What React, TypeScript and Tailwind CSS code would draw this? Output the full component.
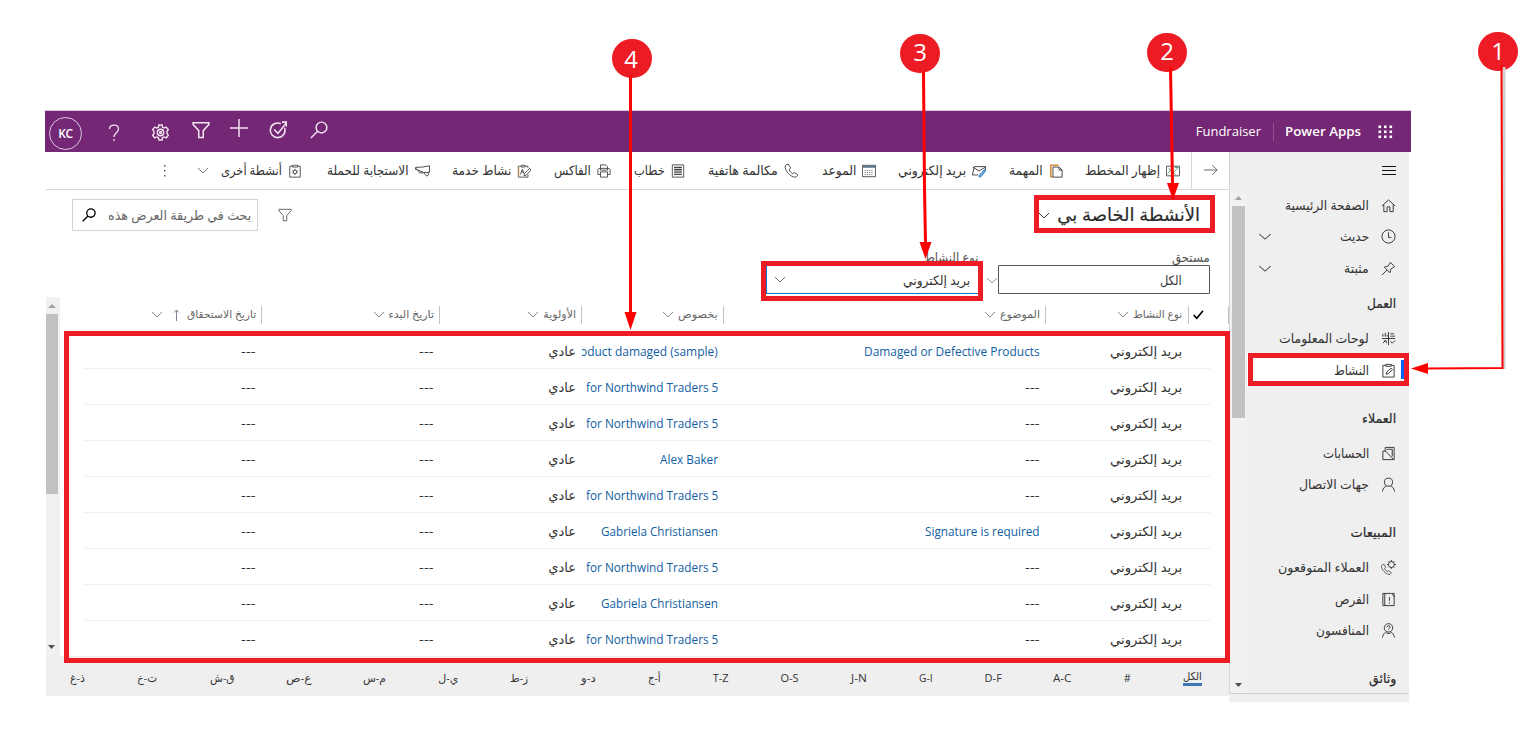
import React, { useLayoutEffect, useRef, useState } from "react";

function Fit({ w, children, className = "" }: { w: number; children: React.ReactNode; className?: string }) {
  const ref = useRef<HTMLSpanElement>(null);
  const [scale, setScale] = useState(1);
  useLayoutEffect(() => {
    if (ref.current && ref.current.offsetWidth > 0) setScale(w / ref.current.offsetWidth);
  }, [w]);
  return (
    <span className={"inline-flex shrink-0 justify-start " + className} style={{ width: w }}>
      <span ref={ref} className="inline-block shrink-0 origin-right whitespace-nowrap" style={{ transform: `scaleX(${scale})` }}>
        {children}
      </span>
    </span>
  );
}

function Icon({ children, size = 14, className = "", stroke = 1 }: { children: React.ReactNode; size?: number; className?: string; stroke?: number }) {
  return (
    <svg width={size} height={size} viewBox="0 0 16 16" fill="none" stroke="currentColor" strokeWidth={stroke} className={"shrink-0 " + className}>
      {children}
    </svg>
  );
}

function Chevron({ className = "" }: { className?: string }) {
  return (
    <svg width="12" height="7" viewBox="0 0 12 7" fill="none" stroke="currentColor" className={"shrink-0 " + className}>
      <path d="M1 1l5 5 5-5" />
    </svg>
  );
}

const searchPath = <path d="M6.6 9.4L.8 15.2M15 5.8a4.8 4.8 0 1 1-9.6 0a4.8 4.8 0 0 1 9.6 0z" />;
const filterPath = <path d="M1 1.5h14v1.6L10 8.6v6H6v-6L1 3.100z" />;
const phonePath = (
  <path d="M4.600 1.200L2.300 2C.6 3 1 5.800 2.800 8.800c2.300 3.700 6 6.200 8.800 6.300 1.600 0 2.600-.9 3.100-2.400l-3.600-2.600-2.100 1.300C7.400 10.400 6.100 8.900 5.400 7.200l1.700-1.900z" />
);

const commands: { label: string; w: number; icon: React.ReactNode }[] = [
  {
    label: "إظهار المخطط", w: 75,
    icon: <Icon><path d="M.5 2.500h15v11H.5z" stroke="#444" /><path d="M2 11l4-5 3 3 5-5M10 4h4M3 5l8 7" stroke="#3a9a62" /></Icon>,
  },
  {
    label: "المهمة", w: 34,
    icon: <Icon><path d="M11 1.500H2v13h2" stroke="#d48b3c" strokeWidth="1.800" /><path d="M4.500 3.500h7l3.500 3.500v8H4.500zM11.500 3.500V7H15" stroke="#333" /></Icon>,
  },
  {
    label: "بريد إلكتروني", w: 68,
    icon: <Icon><path d="M7 12.500H.5l2-9.500h13v4M1 3.500l7 4.500 7.500-4.500" stroke="#333" /><path d="M14.500 6l-6 6.500-.5 2.500 2.500-.7 5-6.300z" fill="#76b1e4" stroke="#2b79b9" /></Icon>,
  },
  {
    label: "الموعد", w: 34,
    icon: <Icon><path d="M.5 1.500h15v13H.5z" /><path d="M1 3.200h14" stroke="#5b7890" strokeWidth="2.200" /><path d="M3 7.500h10M3 9.800h10M3 12.100h10" strokeDasharray="1.500 1" stroke="#777" /></Icon>,
  },
  { label: "مكالمة هاتفية", w: 70, icon: <Icon size={15}>{phonePath}</Icon> },
  {
    label: "خطاب", w: 31,
    icon: <Icon><path d="M1.500 1h13v14h-13z" /><path d="M3.500 4h9M3.500 6.600h9M3.500 9.200h9M3.500 11.800h9" strokeWidth="1.500" /></Icon>,
  },
  {
    label: "الفاكس", w: 37,
    icon: <Icon><path d="M4 5V1h6l2 2v2M4 12H1V6l1-1h12l1 1v6h-3M4 9h8v6H4zM4 5v2h8V5" /></Icon>,
  },
  {
    label: "نشاط خدمة", w: 59,
    icon: <Icon><path d="M5 2.500H1.500v12.500h11v-3M9 2.500h3.500v2M5 1.500h4v2H5z" /><path d="M4 12l2-6 2 5M5 9h3M14.500 5l-6 6-.5 2.500 2.500-.7L16 7z" /><path d="M2 14V3" stroke="#ce8943" /></Icon>,
  },
  {
    label: "الاستجابة للحملة", w: 82,
    icon: <Icon size={15}><path d="M15.500 3v7L9 10 1 6.500v-2h6L15.500 3zM1 4.500l-.5 1 .5 2M9 10l3.500 4 2-1.500-.5-2.500M3 7.500l2 3 4 0" /></Icon>,
  },
  {
    label: "أنشطة أخرى", w: 61,
    icon: <Icon><path d="M5 2.500H2V15h12V2.500h-3M5 1.500h6v2H5z" /><circle cx="8" cy="9" r="2" /><path d="M8 5.500V7M8 11v1.800M4.800 7.500l1.500.7M9.700 9.800l1.500.8M11.200 7.500l-1.500.7M6.300 9.800l-1.500.8" /></Icon>,
  },
];

const columns = [
  { label: "نوع النشاط", w: 49 },
  { label: "الموضوع", w: 40 },
  { label: "بخصوص", w: 40 },
  { label: "الأولوية", w: 33 },
  { label: "تاريخ البدء", w: 45 },
  { label: "تاريخ الاستحقاق", w: 69, sorted: true },
];

const northwind = { text: "for Northwind Traders 5", w: 132 };
const gabriela = { text: "Gabriela Christiansen", w: 117 };
const rows: { subject?: { text: string; w: number }; regarding: { text: string; w: number } }[] = [
  { subject: { text: "Damaged or Defective Products", w: 176 }, regarding: { text: "oduct damaged (sample)", w: 138 } },
  { regarding: northwind },
  { regarding: northwind },
  { regarding: { text: "Alex Baker", w: 58 } },
  { regarding: northwind },
  { subject: { text: "Signature is required", w: 115 }, regarding: gabriela },
  { regarding: northwind },
  { regarding: gabriela },
  { regarding: northwind },
];

const letters: [string, number][] = [
  ["الكل", 19], ["#", 7], ["A-C", 18], ["D-F", 17], ["G-I", 14], ["J-N", 16], ["O-S", 18], ["T-Z", 16], ["أ-ج", 13],
  ["د-و", 15], ["ز-ط", 18], ["ي-ل", 20], ["م-س", 23], ["ع-ص", 25], ["ق-ش", 25], ["ت-خ", 20], ["ذ-غ", 15],
];

function NavItem({ label, w, icon, h, expand, selected }: { label: string; w: number; icon: React.ReactNode; h: string; expand?: boolean; selected?: boolean }) {
  return (
    <div className={"flex shrink-0 items-center pr-[13px] text-[13px] text-[#333] " + h + (selected ? " relative bg-white" : "")}>
      {selected && <span className="absolute right-[4px] top-[6px] h-[19px] w-[4px] bg-[#0a62f5]" />}
      <Icon size={15}>{icon}</Icon>
      <Fit w={w} className="mr-[12px] pt-px">{label}</Fit>
      {expand && <Chevron className="mr-auto ml-[12px] scale-x-[1.15] text-[#555]" />}
    </div>
  );
}

function NavHeading({ label, w, first }: { label: string; w: number; first?: boolean }) {
  return (
    <div className={"flex shrink-0 items-center pr-[13px] text-[13px] text-[#2b2b2b] [-webkit-text-stroke:0.2px_#2b2b2b] " + (first ? "h-[38px] pt-[2px]" : "h-[51px] pt-[14px]")}>
      <Fit w={w}>{label}</Fit>
    </div>
  );
}

function Header() {
  return (
    <header className="flex h-[42px] items-center border-t border-[#d9c3dc] bg-[#742774] pr-[17px] text-[13px] text-white">
      <svg width="15" height="14" viewBox="0 0 15 14" fill="#fff" className="mr-[1px]">
        {[0, 5.500, 11].map((x) => [0, 5, 10].map((y) => <rect key={x + "-" + y} x={x + 0.5} y={y + 0.5} width="2.600" height="2.600" />))}
      </svg>
      <Fit w={76} className="mr-[17px] font-semibold">Power Apps</Fit>
      <span className="mr-[11px] h-[18px] w-px bg-[#8f5490]" />
      <Fit w={65} className="mr-[12px]">Fundraiser</Fit>
      <div className="mr-auto flex h-full items-center text-[#f0e4f0]" dir="ltr">
        <span className="ml-[4px] mt-[4px] flex size-[33px] items-center justify-center rounded-full border border-[#dcc8dc] text-[12px] font-semibold tracking-tight text-white">KC</span>
        <span className="ml-[24px] flex w-[15px] justify-center">
          <svg width="12" height="18" viewBox="0 0 12 18" fill="none" stroke="currentColor" strokeWidth="1.300" className="mt-[2px]">
            <path d="M1.500 5C1.500-.2 10.500-.2 10.500 5c0 3.500-4.500 4-4.500 8M6 15v2" />
          </svg>
        </span>
        <Icon size={17} stroke={1.3} className="ml-[31px] mt-[2px]">
          <path d="M6.500 1h3l.4 2 1.500.8 1.900-.9 2 2.300-1.200 1.700v1.900l1.300 1.800-2 2.400-2-.8-1.500.8-.4 2h-3l-.5-2-1.500-.8-2 .8-1.900-2.400 1.300-1.700V7.100L.6 5.200l2-2.300 1.900.9L6 3z" />
          <circle cx="8" cy="8" r="3" /><circle cx="8" cy="8" r=".9" />
        </Icon>
        <Icon size={18} stroke={1.4} className="ml-[23px] -mt-[3px]">{filterPath}</Icon>
        <Icon size={18} stroke={1.3} className="ml-[20px] -mt-[7px]"><path d="M8 0v16M0 8h16" /></Icon>
        <Icon size={18} stroke={1.4} className="ml-[21px] -mt-[3px]"><path d="M10.500 2.400A6.500 6.500 0 1 0 13.800 6M4.500 7.500L8 11l7.500-9.500M11.500 1h4v4" /></Icon>
        <Icon size={18} stroke={1.3} className="ml-[23px] -mt-[4px]">{searchPath}</Icon>
      </div>
    </header>
  );
}

function CommandBar() {
  return (
    <div className="grid h-[38px] grid-cols-[38px_128px_77px_110px_77px_114px_74px_80px_101px_128px_94px_1fr] items-center border-b border-[#d8d8d8] pb-px text-[13px] text-[#333]">
      <div className="flex h-[37px] items-center border-l border-[#d8d8d8] pr-[11px]">
        <Icon size={14} className="-mt-[2px] text-[#555]"><path d="M0 8h15M9.500 2.500L15 8l-5.500 5.500" /></Icon>
      </div>
      {commands.map((c, i) => (
        <div key={c.label} className={"flex items-center gap-[6px] text-[#444] " + (i === 0 ? "pr-[11px]" : "")}>
          {c.icon}
          <Fit w={c.w} className="text-[#333]">{c.label}</Fit>
        </div>
      ))}
      <div className="flex items-center text-[#777]">
        <Chevron className="-mr-[1px]" />
        <svg width="3" height="14" viewBox="0 0 3 14" fill="#555" className="mr-[31px]">
          <rect x="1" y="1" width="1.500" height="1.500" /><rect x="1" y="6" width="1.500" height="1.500" /><rect x="1" y="11" width="1.500" height="1.500" />
        </svg>
      </div>
    </div>
  );
}

function Grid() {
  return (
    <div className="flex h-[359px]">
      <div className="flex min-w-0 flex-1 flex-col">
        <div className="grid h-[34px] grid-cols-[40px_143px_322px_142px_142px_178px_1fr] items-center pt-[2px] text-[11px] text-[#666]">
          <div className="flex h-[18px] items-center border-r border-[#c4c4c4] pr-[24px] text-black">
            <Icon size={11} stroke={2.4}><path d="M1 9l4.500 4.500L14.500 2.500" /></Icon>
          </div>
          {columns.map((c, i) => (
            <div key={c.label} className={"flex h-[18px] items-center border-r border-[#c4c4c4] " + (i === 0 ? "pr-[6px]" : "pr-[5px]")}>
              <Fit w={c.w}>{c.label}</Fit>
              {c.sorted && (
                <svg width="7" height="12" viewBox="0 0 7 12" fill="none" stroke="#8a7a94" className="mr-[7px]"><path d="M3.500 12V1M1 3.500L3.500 1 6 3.500" /></svg>
              )}
              <Chevron className={(c.sorted ? "mr-[10px]" : "mr-[4px]") + " text-[#888]"} />
            </div>
          ))}
        </div>
        <div className="mr-[18px] ml-[23px] flex flex-col pt-[3px]">
          {rows.map((r, i) => (
            <div key={i} className={"grid grid-cols-[142px_322px_142px_142px_178px_1fr] items-center pt-[2px] pr-[29px] text-[13px] text-[#333] " + (i < rows.length - 1 ? "h-[36px] border-b border-[#f1f1f1]" : "h-[35px]")}>
              <Fit w={72}>بريد إلكتروني</Fit>
              {r.subject ? <Fit w={r.subject.w} className="text-[#115ea3]">{r.subject.text}</Fit> : <Fit w={15}>---</Fit>}
              <div className="w-[136px] overflow-hidden text-[#115ea3]">
                <Fit w={r.regarding.w}><bdi>{r.regarding.text}</bdi></Fit>
              </div>
              <Fit w={28}>عادي</Fit>
              <Fit w={15}>---</Fit>
              <Fit w={15}>---</Fit>
            </div>
          ))}
        </div>
      </div>
      <div className="flex w-[14px] flex-col items-start bg-[#f1f1f1]" dir="ltr">
        <svg width="12" height="17" viewBox="0 0 12 17" fill="#a3a3a3"><path d="M2 11h8L6 7z" /></svg>
        <div className="h-[180px] w-[12px] bg-[#c1c1c1]" />
        <svg width="12" height="17" viewBox="0 0 12 17" fill="#505050" className="mt-auto"><path d="M2 6h7L5.500 10z" /></svg>
      </div>
    </div>
  );
}

function Sidebar() {
  return (
    <aside className="flex h-[550px] w-[180px] flex-col bg-[#efefef]">
      <div className="flex h-[542px] flex-col overflow-hidden border-b border-[#d0d0d0]">
        <div className="flex h-[38px] shrink-0 items-center border-l border-[#d6d6d6] pr-[13px] pb-px">
          <svg width="14" height="11" viewBox="0 0 14 11" stroke="#111"><path d="M0 1.500h14M0 5.500h14M0 9.500h14" /></svg>
        </div>
        <div className="flex flex-1">
          <nav className="flex h-[504px] w-[162px] flex-col overflow-hidden text-[#333]">
            <NavItem h="h-[31px]" label="الصفحة الرئيسية" w={84} icon={<path d="M1 8.500L8 2l7 6.500M3 7v7.500h3.500v-5h3v5H13V7" />} />
            <NavItem h="h-[31px]" expand label="حديث" w={29} icon={<><circle cx="8" cy="8" r="7" /><path d="M8 3.500V9h3" /></>} />
            <NavItem h="h-[32px]" expand label="مثبتة" w={25} icon={<path d="M10 1.500L14.500 6 10.500 8.500 9.500 12.500 3.500 6.500 7.500 5.500zM6.500 9.500L1 15" />} />
            <NavHeading first label="العمل" w={29} />
            <NavItem h="h-[32px]" label="لوحات المعلومات" w={90} icon={<path d="M8 1v14M1 8h14M2 6V3M4.500 6V2M6.500 6V4M10 3h4M10 5.500h5M2 13l3-3 1 3M10 11l2 2 3-3M3 10.500h2" />} />
            <NavItem h="h-[32px]" selected label="النشاط" w={35} icon={<path d="M5 2.500H2V15h12V2.500h-3M5 1.500h6v2H5zM5.500 12l.7-2.500 4.500-4 1.600 1.500-4.500 4.300z" />} />
            <NavHeading label="العملاء" w={34} />
            <NavItem h="h-[32px]" label="الحسابات" w={46} icon={<path d="M2 5.500h3l8 8.500M2 5.500v9h12v-13H4.500v4M6 3.500h6V11" />} />
            <NavItem h="h-[31px]" label="جهات الاتصال" w={70} icon={<><circle cx="8" cy="5.500" r="4.300" /><path d="M1.500 15.500c.5-4 3-5.500 4.500-6M14.500 15.500c-.5-4-3-5.500-4.500-6" /></>} />
            <NavHeading label="المبيعات" w={45} />
            <NavItem h="h-[32px]" label="العملاء المتوقعون" w={91} icon={<><g transform="translate(-.5 3.500) scale(.78)">{phonePath}</g><circle cx="11" cy="4.800" r="3.200" /><path d="M11 0v2M11 7.500v2M6.500 4.800H8M14 4.800h2M8 1.500l1 1M14 1.500l-1 1M13 7l1 1" /></>} />
            <NavItem h="h-[32px]" label="الفرص" w={34} icon={<path d="M2 1.500h9l3 3v10H2zM4 1.500v13M9 5.500v4M9 11v1.300M11.500 1.500h2.500v4" />} />
            <NavItem h="h-[31px]" label="المنافسون" w={53} icon={<><circle cx="8" cy="5.200" r="4.500" /><path d="M6.300 4.500c0-2 3.400-2 3.400 0C9.700 5.800 8 5.500 8 7M1.500 15.500c.5-3 2.500-5.500 4.500-6M14.500 15.500c-.5-3-2.500-5.500-4.500-6M6 11l4 0" /></>} />
            <NavHeading label="وثائق" w={27} />
          </nav>
          <div className="flex h-[504px] w-[18px] flex-col items-center border-l border-[#d6d6d6] bg-[#f1f1f1]">
            <svg width="13" height="16" viewBox="0 0 13 16" fill="#a3a3a3"><path d="M3 10h7L6.500 6z" /></svg>
            <div className="h-[212px] w-[13px] bg-[#c1c1c1]" />
            <svg width="13" height="17" viewBox="0 0 13 17" fill="#505050" className="mt-auto"><path d="M3 6h7L6.500 10z" /></svg>
          </div>
        </div>
      </div>
    </aside>
  );
}

function Callout({ n, pos }: { n: number; pos: string }) {
  return (
    <div dir="ltr" className={"absolute flex h-[39px] w-[40px] items-center justify-center rounded-full bg-[#ed1c24] text-[24px] leading-none text-white " + pos}>{n}</div>
  );
}

export default function App() {
  return (
    <div dir="rtl" className="relative h-[737px] w-[1534px] overflow-hidden bg-white pt-[110px] pr-[123px] font-['Open_Sans','Noto_Sans','DejaVu_Sans',sans-serif]">
      <div className="w-[1366px]">
        <Header />
        <div className="flex items-start pr-[2px]">
          <Sidebar />
          <main className="flex h-[544px] w-[1183px] flex-col bg-white">
            <CommandBar />
            <div className="flex h-[55px] items-center pr-[29px] pb-[5px]">
              <Fit w={143} className="-mt-[2px] text-[18px] text-[#2b2b2b] [-webkit-text-stroke:0.2px_#2b2b2b]">الأنشطة الخاصة بي</Fit>
              <Chevron className="mr-[7px] text-[#333]" />
              <Icon size={14} className="mr-auto ml-[20px] text-[#555]">{filterPath}</Icon>
              <div className="mr-0 ml-[26px] flex h-[32px] w-[186px] shrink-0 items-center border border-[#d2d2d2] pr-[6px] text-[13px] text-[#666]">
                <Fit w={143} className="pt-[2px]">بحث في طريقة العرض هذه</Fit>
                <Icon size={14} stroke={1.5} className="mr-[12px] text-black">{searchPath}</Icon>
              </div>
            </div>
            <div className="flex h-[52px] items-start pr-[19px] pt-[4px] text-[13px] text-[#555]">
              <div className="flex w-[212px] flex-col">
                <div className="flex h-[16px] items-center pt-[2px]"><Fit w={38}>مستحق</Fit></div>
                <div className="flex h-[29px] items-center rounded-[1px] border border-[#555] pt-[2px] pr-[27px] text-[#333]"><Fit w={22}>الكل</Fit></div>
              </div>
              <Chevron className="mt-[28px] text-[#999]" />
              <div className="mr-[7px] flex w-[213px] flex-col">
                <div className="flex h-[16px] items-center pt-[2px]"><Fit w={55}>نوع النشاط</Fit></div>
                <div className="flex h-[29px] items-center border border-[#0f78c8] pr-[8px] text-[#333]">
                  <Fit w={67} className="pt-[2px]">بريد إلكتروني</Fit>
                  <Chevron className="mr-auto ml-[7px] text-[#777]" />
                </div>
              </div>
            </div>
            <Grid />
            <footer className="flex h-[40px] items-center justify-between bg-[#efefef] pr-[27px] pl-[24px] pt-[4px] text-[11px] text-[#333]">
              {letters.map(([l, w], i) => (
                <Fit key={l} w={w} className={i === 0 ? "h-[16px] items-end border-b-[3px] border-[#3b78b5] leading-[14px]" : ""}><bdi>{l}</bdi></Fit>
              ))}
            </footer>
          </main>
        </div>
      </div>

      <div className="absolute top-[353px] left-[1248px] h-[33px] w-[161px] border-[5px] border-[#ed1c24]" />
      <div className="absolute top-[195px] left-[1034px] h-[38px] w-[181px] border-[5px] border-[#ed1c24]" />
      <div className="absolute top-[261px] left-[761px] h-[40px] w-[222px] border-[5px] border-[#ed1c24]" />
      <div className="absolute top-[331px] left-[64px] h-[332px] w-[1166px] border-[5px] border-[#ed1c24]" />

      <Callout n={1} pos="left-[1478px] top-[32px] pb-[2px]" />
      <Callout n={2} pos="left-[1147px] top-[33px] pb-[4px]" />
      <Callout n={3} pos="left-[900px] top-[34px] pb-[4px]" />
      <Callout n={4} pos="left-[612px] top-[39px] pr-[2px]" />
      <svg width="1534" height="737" viewBox="0 0 1534 737" className="pointer-events-none absolute top-0 left-0" fill="none" stroke="#fe0000" strokeWidth="3">
        <path d="M1504 67v302" stroke="#cfcfcf" />
        <path d="M1501.500 65L1502.500 368L1426 368.500" strokeWidth="2" />
        <path d="M1170.500 67L1172.500 184" />
        <path d="M923.500 72L924.500 188L925.500 243" />
        <path d="M630.500 75V314" />
        <g fill="#fe0000" stroke="none">
          <path d="M1411 368.500l17-5.500v11z" />
          <path d="M1173 200l-6-17h12z" />
          <path d="M925.500 259l-6-17h12z" />
          <path d="M630.500 330l-6-18h12z" />
        </g>
      </svg>
    </div>
  );
}
